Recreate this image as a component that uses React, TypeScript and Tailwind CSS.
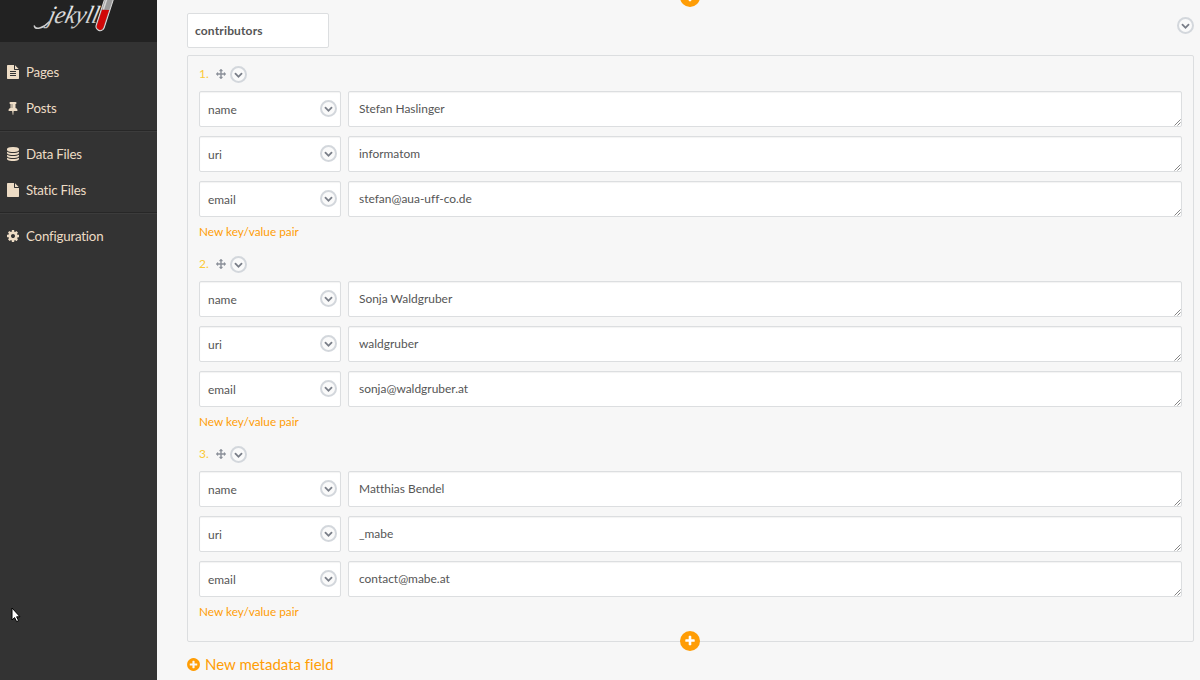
import type { ReactNode } from "react";

const paths = {
  fileText:
    "M1596 476q14 14 28 36h-472v-472q22 14 36 28zm-476 164h544v1056q0 40-28 68t-68 28h-1344q-40 0-68-28t-28-68v-1600q0-40 28-68t68-28h800v544q0 40 28 68t68 28zm160 736v-64q0-14-9-23t-23-9h-704q-14 0-23 9t-9 23v64q0 14 9 23t23 9h704q14 0 23-9t9-23zm0-256v-64q0-14-9-23t-23-9h-704q-14 0-23 9t-9 23v64q0 14 9 23t23 9h704q14 0 23-9t9-23zm0-256v-64q0-14-9-23t-23-9h-704q-14 0-23 9t-9 23v64q0 14 9 23t23 9h704q14 0 23-9t9-23z",
  pin: "M800 864v-448q0-14-9-23t-23-9-23 9-9 23v448q0 14 9 23t23 9 23-9 9-23zm672 352q0 26-19 45t-45 19h-429l-51 483q-2 12-10.5 20.5t-20.5 8.5h-1q-27 0-32-27l-76-485h-404q-26 0-45-19t-19-45q0-123 78.5-221.5t177.5-98.5v-512q-52 0-90-38t-38-90 38-90 90-38h640q52 0 90 38t38 90-38 90-90 38v512q99 0 177.5 98.5t78.5 221.5z",
  database:
    "M896 768q237 0 443-43t325-127v170q0 69-103 128t-280 93.5-385 34.5-385-34.5-280-93.5-103-128v-170q119 84 325 127t443 43zm0 768q237 0 443-43t325-127v170q0 69-103 128t-280 93.5-385 34.5-385-34.5-280-93.5-103-128v-170q119 84 325 127t443 43zm0-384q237 0 443-43t325-127v170q0 69-103 128t-280 93.5-385 34.5-385-34.5-280-93.5-103-128v-170q119 84 325 127t443 43zm0-1152q208 0 385 34.5t280 93.5 103 128v128q0 69-103 128t-280 93.5-385 34.5-385-34.5-280-93.5-103-128v-128q0-69 103-128t280-93.5 385-34.5z",
  file: "M1152 512v-472q22 14 36 28l408 408q14 14 28 36h-472zm-128 32q0 40 28 68t68 28h544v1056q0 40-28 68t-68 28h-1344q-40 0-68-28t-28-68v-1600q0-40 28-68t68-28h800v544z",
  cog: "M1152 896q0-106-75-181t-181-75-181 75-75 181 75 181 181 75 181-75 75-181zm512-109v222q0 12-8 23t-20 13l-185 28q-19 54-39 91 35 50 107 138 10 12 10 25t-9 23q-27 37-99 108t-94 71q-12 0-26-9l-138-108q-44 23-91 38-16 136-29 186-7 28-36 28h-222q-14 0-24.5-8.5t-11.5-21.5l-28-184q-49-16-90-37l-141 107q-10 9-25 9-14 0-25-11-126-114-165-168-7-10-7-23 0-12 8-23 15-21 51-66.5t54-70.5q-27-50-41-99l-183-27q-13-2-21-12.5t-8-23.5v-222q0-12 8-23t19-13l186-28q14-46 39-92-40-57-107-138-10-12-10-24 0-10 9-23 26-36 98.5-107.5t94.5-71.5q13 0 26 10l138 107q44-23 91-38 16-136 29-186 7-28 36-28h222q14 0 24.5 8.5t11.5 21.5l28 184q49 16 90 37l142-107q9-9 24-9 13 0 25 10 129 119 165 170 7 8 7 22 0 12-8 23-15 21-51 66.5t-54 70.5q26 50 41 98l183 28q13 2 21 12.5t8 23.5z",
  move: "M1792 896q0 26-19 45l-256 256q-19 19-45 19t-45-19-19-45v-128h-384v384h128q26 0 45 19t19 45-19 45l-256 256q-19 19-45 19t-45-19l-256-256q-19-19-19-45t19-45 45-19h128v-384h-384v128q0 26-19 45t-45 19-45-19l-256-256q-19-19-19-45t19-45l256-256q19-19 45-19t45 19 19 45v128h384v-384h-128q-26 0-45-19t-19-45 19-45l256-256q19-19 45-19t45 19l256 256q19 19 19 45t-19 45-45 19h-128v384h384v-128q0-26 19-45t45-19 45 19l256 256q19 19 19 45z",
  chevron:
    "M1683 808l-742 741q-19 19-45 19t-45-19l-742-741q-19-19-19-45.5t19-45.5l166-165q19-19 45-19t45 19l531 531 531-531q19-19 45-19t45 19l166 165q19 19 19 45.5t-19 45.5z",
  plus: "M1600 736v192q0 40-28 68t-68 28h-416v416q0 40-28 68t-68 28h-192q-40 0-68-28t-28-68v-416h-416q-40 0-68-28t-28-68v-192q0-40 28-68t68-28h416v-416q0-40 28-68t68-28h192q40 0 68 28t28 68v416h416q40 0 68 28t28 68z",
  plusCircle:
    "M1344 960v-128q0-26-19-45t-45-19h-256v-256q0-26-19-45t-45-19h-128q-26 0-45 19t-19 45v256h-256q-26 0-45 19t-19 45v128q0 26 19 45t45 19h256v256q0 26 19 45t45 19h128q26 0 45-19t19-45v-256h256q26 0 45-19t19-45zm320-64q0 209-103 385.5t-279.5 279.5-385.5 103-385.5-103-279.5-279.5-103-385.5 103-385.5 279.5-279.5 385.5-103 385.5 103 279.5 279.5 103 385.5z",
};

type IconName = keyof typeof paths;

function Icon({ name, className }: { name: IconName; className: string }) {
  return (
    <svg viewBox="0 0 1792 1792" fill="currentColor" className={"shrink-0 " + className}>
      <path d={paths[name]} />
    </svg>
  );
}

function Logo() {
  return (
    <svg width="157" height="42" viewBox="0 0 157 42" className="block">
      <defs>
        <linearGradient id="ink" x1="0" y1="0" x2="0" y2="1">
          <stop offset="0" stopColor="#f8f8f8" />
          <stop offset="1" stopColor="#c4c4c4" />
        </linearGradient>
      </defs>
      <path
        d="M34.300 26c1 4 8.500 2.700 14.700-4"
        fill="none"
        stroke="#cfcfcf"
        strokeWidth="1.4"
        strokeLinecap="round"
      />
      <text
        x="0"
        y="0"
        transform="translate(47 22.500) skewX(-14)"
        textLength="50"
        lengthAdjust="spacingAndGlyphs"
        fill="url(#ink)"
        className="font-['Liberation_Serif',serif] text-[25px] italic"
      >
        jekyll
      </text>
      <g transform="rotate(18 104 14)">
        <path d="M100-8h8.400v35a4.200 4.200 0 0 1-8.400 0z" fill="#9b9b9b" stroke="#dcdcdc" strokeWidth="1" />
        <path d="M100.800 10.500l6.800-2v18.500a3.400 3.400 0 0 1-6.800 0z" fill="#d00808" />
        <path d="M102-7v17" stroke="#f0f0f0" strokeOpacity=".7" strokeWidth="1.500" />
      </g>
    </svg>
  );
}

function NavItem({ icon, children }: { icon: IconName; children: ReactNode }) {
  return (
    <a className="flex h-9 items-center gap-[6px] pl-[6px]">
      <Icon name={icon} className="size-[14px]" />
      <span>{children}</span>
    </a>
  );
}

function Toggle() {
  return (
    <span className="flex size-[17px] shrink-0 items-center justify-center rounded-full border-2 border-[#d3d7dc] bg-[#fafafa] text-[#787d87]">
      <Icon name="chevron" className="size-[9px]" />
    </span>
  );
}

function PlusBadge() {
  return (
    <span className="flex size-5 items-center justify-center rounded-full bg-[#ff9d05] text-white">
      <Icon name="plus" className="size-3" />
    </span>
  );
}

const contributors = [
  { name: "Stefan Haslinger", uri: "informatom", email: "stefan@aua-uff-co.de" },
  { name: "Sonja Waldgruber", uri: "waldgruber", email: "sonja@waldgruber.at" },
  { name: "Matthias Bendel", uri: "_mabe", email: "contact@mabe.at" },
];

function Pair({ label, value }: { label: string; value: string }) {
  return (
    <div className="flex h-9 gap-[7px]">
      <div className="flex w-[142px] shrink-0 items-center justify-between rounded-[2px] border border-[#dcdee0] bg-white pr-[3px] pl-2 shadow-[inset_0_1px_1px_#0000000d]">
        <span className="pt-px">{label}</span>
        <span className="pb-px">
          <Toggle />
        </span>
      </div>
      <div className="flex grow items-center justify-between rounded-[2px] border border-[#dcdee0] bg-white pl-[10px] shadow-[inset_0_1px_1px_#0000000d]">
        <span>{value}</span>
        <svg viewBox="0 0 7 7" className="size-[7px] self-end" fill="none" stroke="#777" strokeWidth="0.9">
          <path d="M0.500 6.500l6-6M3.500 6.500l3-3" />
        </svg>
      </div>
    </div>
  );
}

export default function App() {
  return (
    <div className="flex h-[680px] w-[1200px] overflow-hidden bg-[#f7f7f7] font-['Lato',sans-serif] text-[11.95px] leading-4 text-[#555555] [font-variant-ligatures:none]">
      <aside className="w-[157px] shrink-0 bg-[#333333] text-[13.3px] tracking-[-0.2px] text-[#eddcc5]">
        <div className="h-[42px] bg-[#222222]">
          <Logo />
        </div>
        <nav className="pt-3">
          <div className="h-[77px] border-b border-[#272727]">
            <NavItem icon="fileText">Pages</NavItem>
            <NavItem icon="pin">Posts</NavItem>
          </div>
          <div className="h-[82px] border-t border-b border-t-[#3c3c3c] border-b-[#272727] pt-[4px]">
            <NavItem icon="database">Data Files</NavItem>
            <NavItem icon="file">Static Files</NavItem>
          </div>
          <div className="border-t border-[#3c3c3c] pt-[4px]">
            <NavItem icon="cog">Configuration</NavItem>
          </div>
        </nav>
      </aside>
      <main className="relative grow pr-[6px] pl-[30px]">
        <div className="absolute -top-[13px] left-[523px]">
          <PlusBadge />
        </div>
        <div className="flex h-[55px] items-start justify-between pt-[13px]">
          <div className="flex h-[35px] w-[142px] items-center rounded-[2px] border border-[#dcdee0] bg-white px-[7px] text-[12px] font-bold tracking-[0.15px]">
            contributors
          </div>
          <div className="pt-[4px]">
            <Toggle />
          </div>
        </div>
        <section className="relative h-[587px] rounded-[2px] border border-[#dcdee0] px-[11px] pt-[9px]">
          {contributors.map((c, i) => (
            <div key={c.name} className="h-[190px]">
              <div className="flex h-[26px] items-start">
                <span className="w-[17px] pt-px text-[12px] text-[#fbc936]">{i + 1}.</span>
                <Icon name="move" className="mt-1 size-[10px] text-[#8b9099]" />
                <span className="pt-px pl-[4px]">
                  <Toggle />
                </span>
              </div>
              <div className="flex flex-col gap-[9px]">
                <Pair label="name" value={c.name} />
                <Pair label="uri" value={c.uri} />
                <Pair label="email" value={c.email} />
              </div>
              <a className="block pt-[7px] text-[11.8px] text-[#ff9d05]">New key/value pair</a>
            </div>
          ))}
          <div className="absolute -bottom-[10px] left-[492px]">
            <PlusBadge />
          </div>
        </section>
        <a className="-ml-px flex items-center gap-1 pt-3 text-[15px] leading-5 text-[#ff9d05]">
          <Icon name="plusCircle" className="size-[15px]" />
          New metadata field
        </a>
      </main>
      <svg width="10" height="16" viewBox="0 0 10 16" className="absolute top-[607px] left-[11px]">
        <path d="M1 1v12l2.600-2.400 2 4 2-1-2-3.800H9z" fill="#fff" stroke="#000" strokeWidth="1" />
      </svg>
    </div>
  );
}
